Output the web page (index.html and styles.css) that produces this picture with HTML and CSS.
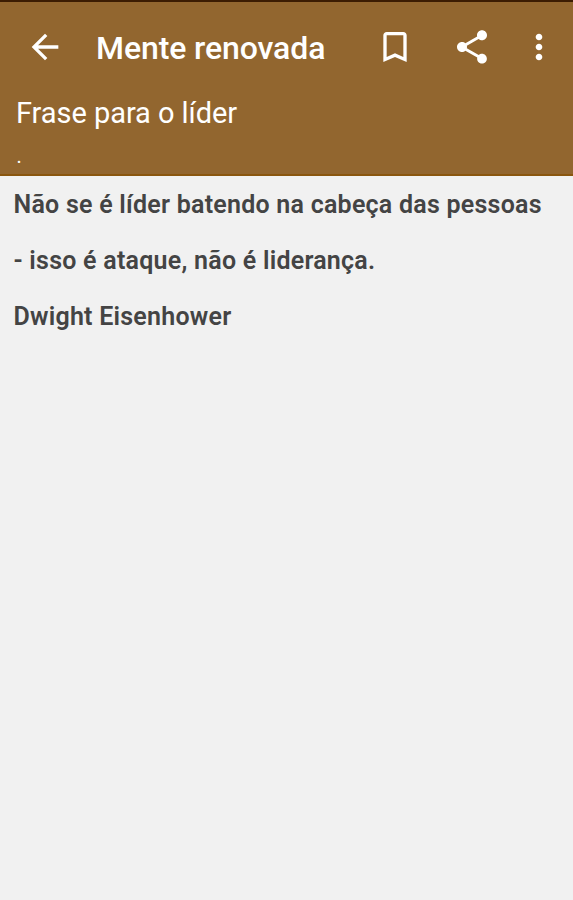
FILE: index.html
```html
<!DOCTYPE html>
<html lang="pt">

<head>
  <meta charset="UTF-8">
  <meta name="viewport" content="width=device-width, initial-scale=1.0">
  <title>Mente renovada</title>
  <link rel="stylesheet" href="styles.css">
</head>

<body>
  <header class="app-header">
    <div class="toolbar">
      <svg class="icon back" viewBox="0 0 24 24"><path d="M20 11H7.83l5.59-5.59L12 4l-8 8 8 8 1.41-1.41L7.83 13H20v-2z"/></svg>
      <h1>Mente renovada</h1>
      <svg class="icon bookmark" viewBox="0 0 24 24"><path d="M17 3H7c-1.1 0-2 .9-2 2v16l7-3 7 3V5c0-1.1-.9-2-2-2zm0 15l-5-2.18L7 18V5h10v13z"/></svg>
      <svg class="icon share" viewBox="0 0 24 24"><path d="M18 16.08c-.76 0-1.44.3-1.96.77L8.91 12.7c.05-.23.09-.46.09-.7s-.04-.47-.09-.7l7.05-4.11c.54.5 1.25.81 2.04.81 1.66 0 3-1.34 3-3s-1.34-3-3-3-3 1.34-3 3c0 .24.04.47.09.7L8.04 9.81C7.5 9.31 6.79 9 6 9c-1.66 0-3 1.34-3 3s1.34 3 3 3c.79 0 1.5-.31 2.04-.81l7.12 4.16c-.05.21-.08.43-.08.65 0 1.61 1.31 2.92 2.92 2.92s2.92-1.31 2.92-2.92-1.31-2.92-2.92-2.92z"/></svg>
      <svg class="icon more" viewBox="0 0 24 24"><path d="M12 8c1.1 0 2-.9 2-2s-.9-2-2-2-2 .9-2 2 .9 2 2 2zm0 2c-1.1 0-2 .9-2 2s.9 2 2 2 2-.9 2-2-.9-2-2-2zm0 6c-1.1 0-2 .9-2 2s.9 2 2 2 2-.9 2-2-.9-2-2-2z"/></svg>
    </div>
    <h2>Frase para o líder</h2>
    <p class="date">.</p>
  </header>

  <main class="content">
    <p>Não se é líder batendo na cabeça das pessoas</p>
    <p>- isso é ataque, não é liderança.</p>
    <p>Dwight Eisenhower</p>
  </main>
</body>

</html>
```
FILE: styles.css
```css
* {
  box-sizing: border-box;
  margin: 0;
  padding: 0;
}

body {
  min-height: 100vh;
  background: #f1f1f1;
  font-family: Roboto, 'Liberation Sans', sans-serif;
}

.app-header {
  height: 176px;
  background: #92662f;
  border-top: 2px solid #3c1c02;
  border-bottom: 2px solid #8a560f;
  color: #fff;
}

.toolbar {
  display: flex;
  align-items: center;
  height: 90px;
  padding: 0 14.5px 0 25px;
}

.icon {
  flex: none;
  width: 40px;
  height: 40px;
  fill: #fff;
}

.toolbar h1 {
  flex: 1;
  margin-left: 31px;
  padding-top: 2px;
  font-size: 32px;
  font-weight: 500;
  letter-spacing: -0.1px;
  line-height: 40px;
  white-space: nowrap;
}

.share {
  margin: 0 27px 0 37px;
}

.app-header h2 {
  padding: 1px 0 0 16px;
  font-size: 29px;
  font-weight: 400;
  letter-spacing: -0.05px;
  line-height: 40px;
}

.date {
  padding: 3px 0 0 16.5px;
  font-size: 20px;
  line-height: 40px;
}

.content {
  padding: 1px 13.5px 0;
}

.content p {
  color: #444;
  font-size: 25px;
  font-weight: 600;
  letter-spacing: 0.24px;
  line-height: 56px;
  white-space: nowrap;
}
```
